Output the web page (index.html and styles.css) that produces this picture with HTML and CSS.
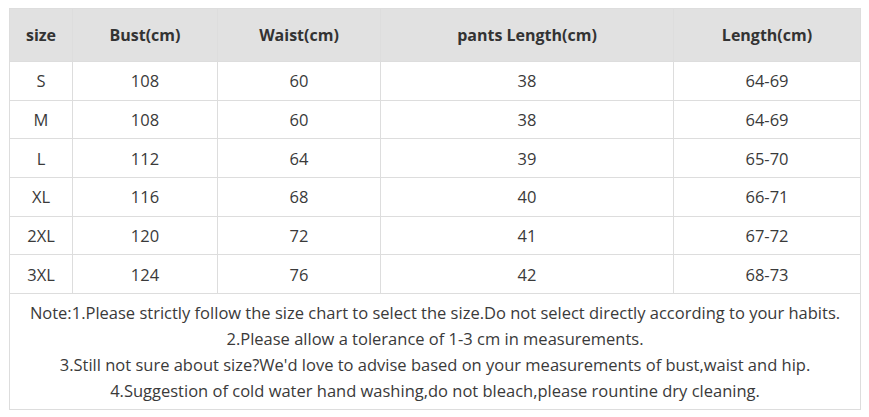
FILE: index.html
```html
<!DOCTYPE html>
<html>
<head>
<meta charset="utf-8">
<link rel="stylesheet" href="styles.css">
</head>
<body>
<table class="chart">
  <colgroup>
    <col class="c1"><col class="c2"><col class="c3"><col class="c4"><col class="c5">
  </colgroup>
  <thead>
    <tr><th>size</th><th>Bust(cm)</th><th>Waist(cm)</th><th>pants Length(cm)</th><th>Length(cm)</th></tr>
  </thead>
  <tbody>
    <tr><td>S</td><td>108</td><td>60</td><td>38</td><td>64-69</td></tr>
    <tr><td>M</td><td>108</td><td>60</td><td>38</td><td>64-69</td></tr>
    <tr><td>L</td><td>112</td><td>64</td><td>39</td><td>65-70</td></tr>
    <tr><td>XL</td><td>116</td><td>68</td><td>40</td><td>66-71</td></tr>
    <tr><td>2XL</td><td>120</td><td>72</td><td>41</td><td>67-72</td></tr>
    <tr><td>3XL</td><td>124</td><td>76</td><td>42</td><td>68-73</td></tr>
    <tr class="note"><td colspan="5">Note:1.Please strictly follow the size chart to select the size.Do not select directly according to your habits.<br>2.Please allow a tolerance of 1-3 cm in measurements.<br>3.Still not sure about size?We'd love to advise based on your measurements of bust,waist and hip.<br>4.Suggestion of cold water hand washing,do not bleach,please rountine dry cleaning.</td></tr>
  </tbody>
</table>
</body>
</html>
```
FILE: styles.css
```css
html, body {
  margin: 0;
  padding: 0;
  background: #ffffff;
}
body {
  padding: 8px 0 0 9px;
  font-family: "Open Sans", "Noto Sans", sans-serif;
  color: #333333;
}
.chart {
  border-collapse: collapse;
  table-layout: fixed;
  width: 851px;
}
.c1 { width: 63px; }
.c2 { width: 145px; }
.c3 { width: 163px; }
.c4 { width: 293px; }
.c5 { width: 187px; }
.chart th, .chart td {
  border: 1px solid #dddddd;
  text-align: center;
  padding: 0;
}
.chart th {
  background: #e1e1e1;
  height: 52px;
  font-size: 16px;
  font-weight: 700;
  color: #333333;
}
.chart td {
  height: 37.7px;
  font-size: 16.5px;
  color: #3a3a3a;
}
.chart .note td {
  height: 115px;
  font-size: 16.5px;
  line-height: 26px;
  padding: 0;
}
```
